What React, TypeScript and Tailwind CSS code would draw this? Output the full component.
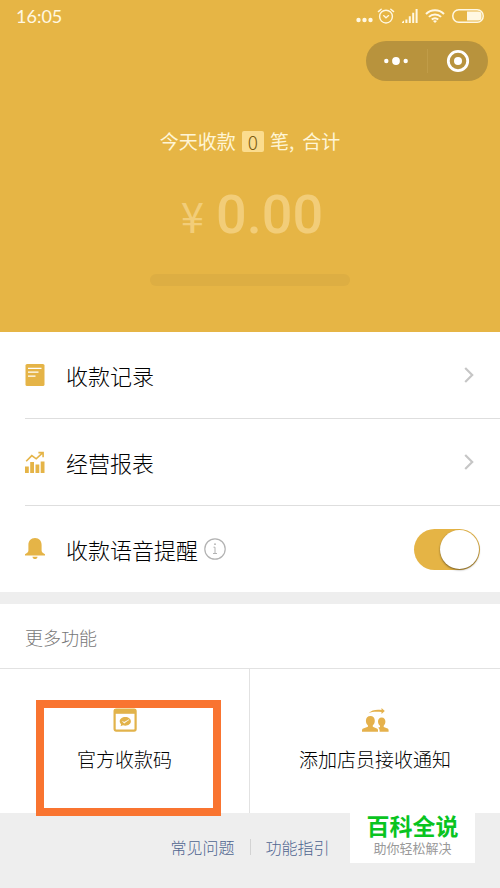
import { useState, type ReactNode } from "react";

type RowProps = {
  icon: ReactNode;
  label: string;
};

function AlarmIcon() {
  return (
    <svg width="18" height="16" viewBox="0 0 18 16" fill="none" stroke="currentColor" strokeLinecap="round" aria-hidden>
      <circle cx="9" cy="8.6" r="6.4" strokeWidth="1.4" />
      <path d="M6.6 7.6 9 9.8l2.6-2.2" strokeWidth="1.3" />
      <path d="M1.4 3.6 4.2 1.2M16.6 3.6 13.8 1.2" strokeWidth="1.4" />
    </svg>
  );
}

function SignalIcon() {
  return (
    <svg width="16" height="14" viewBox="0 0 16 14" fill="currentColor" aria-hidden>
      <path d="M0 14v-1l2-1.6V14zM3.4 10.4h2V14h-2zM6.8 7.2h2V14h-2zM10.2 3.8h2V14h-2zM13.6 0h2v14h-2z" />
    </svg>
  );
}

function WifiIcon() {
  return (
    <svg width="20" height="14" viewBox="0 0 20 14" fill="none" stroke="currentColor" strokeWidth="2" aria-hidden>
      <path d="M1 5c5-5 13-5 18 0" />
      <path d="M3.9 7.9c3.4-3.3 8.8-3.3 12.2 0" />
      <path d="M6.8 10.6c1.8-1.7 4.6-1.7 6.4 0" />
      <path d="M10 14 8 12c1.1-1 2.9-1 4 0z" fill="currentColor" stroke="none" />
    </svg>
  );
}

function BatteryIcon() {
  return (
    <svg width="32" height="14" viewBox="0 0 32 14" aria-hidden>
      <rect x="0.8" y="0.8" width="30.4" height="12.4" rx="6" fill="none" stroke="currentColor" strokeWidth="1.5" />
      <path d="M15 2.6h11.5a3 3 0 0 1 3 3v2.8a3 3 0 0 1-3 3H15z" fill="currentColor" />
    </svg>
  );
}

function RecordIcon() {
  return (
    <svg width="20" height="22" viewBox="0 0 20 22" aria-hidden>
      <rect x="0.5" width="19" height="22" rx="1.6" fill="#e5b447" />
      <path d="M3 4.3h13.5M3 8.2h10.5M3 12.2h7.5" stroke="#fff" strokeWidth="1.3" />
    </svg>
  );
}

function ReportIcon() {
  return (
    <svg width="20" height="22" viewBox="0 0 20 22" fill="#e5b447" aria-hidden>
      <path d="M0 15.5h3.8V22H0zM5.2 11H9v11H5.2zM10.5 13.5h3.8V22h-3.8zM15.7 10.5h3.8V22h-3.8z" />
      <path d="M1.2 10.2 6.8 4.6l4.4 3.2 6.4-6M13.4 1.6h4.7v4.6" fill="none" stroke="#e5b447" strokeWidth="1.6" />
    </svg>
  );
}

function BellIcon() {
  return (
    <svg width="20" height="22" viewBox="0 0 20 22" fill="#e5b447" aria-hidden>
      <path d="M10 0c4.2 0 6.6 3 6.6 7v5.6c0 1.6 1 2.6 3.4 3.6v1.2H0v-1.2c2.4-1 3.4-2 3.4-3.6V7c0-4 2.4-7 6.6-7z" />
      <path d="M7.4 18.8h5.2c-.3 1.5-1.3 2.3-2.6 2.3s-2.3-.8-2.6-2.3z" />
    </svg>
  );
}

function InfoIcon() {
  return (
    <svg width="22" height="22" viewBox="0 0 22 22" fill="none" stroke="#b2b2b2" aria-hidden>
      <circle cx="11" cy="11" r="10.2" strokeWidth="1.2" />
      <path d="M9.5 9.2H11v6.3M9 15.500h4" strokeWidth="1" />
      <circle cx="11" cy="6.2" r="0.9" fill="#b2b2b2" stroke="none" />
    </svg>
  );
}

function ChevronIcon() {
  return (
    <svg width="10" height="16" viewBox="0 0 10 16" fill="none" stroke="#c6c6c6" strokeWidth="2.2" aria-hidden>
      <path d="m1.2 1 7 7-7 7" />
    </svg>
  );
}

function CodeIcon() {
  return (
    <svg width="24" height="24" viewBox="0 0 24 24" aria-hidden>
      <rect x="1.6" y="1.6" width="21" height="21" rx="1.5" fill="none" stroke="#e2b34b" strokeWidth="2.2" />
      <path d="M1 1h22v4.8H1z" fill="#e2b34b" />
      <path d="M12.3 9c3.2 0 5.6 1.9 5.6 4.3s-2.4 4.400-5.600 4.400c-.8 0-1.600-.1-2.300-.4l-2.400.9.500-2c-.9-.8-1.400-1.800-1.400-2.900C6.700 10.900 9.100 9 12.300 9z" fill="#e2b34b" />
      <path d="m9.400 13.300 1.700.9 5-2.600-4.900 3.600z" fill="#fff" stroke="#fff" strokeWidth="0.4" />
    </svg>
  );
}

function StaffIcon() {
  return (
    <svg width="28" height="24" viewBox="0 0 28 24" fill="#e5b14c" aria-hidden>
      <path d="M7.5 5.2c3-3.2 7.4-4 13-3.3V0l3.3 3.1L20.5 6V4C15.500 3.400 11 3.600 7.500 5.200z" />
      <path d="M9.400 8c2.700 0 4.400 1.900 4.400 4.700 0 2-.8 3.600-2 4.600v1.500l4 1.700c.8.400 1.200.9 1.200 2v1.200H1v-1.200c0-1.100.4-1.600 1.200-2l4.700-1.700v-1.500c-1.200-1-2-2.600-2-4.600C4.900 9.900 6.700 8 9.400 8z" />
      <path d="M20.700 9.500c2.400 0 3.700 1.700 3.700 4.100 0 1.800-.7 3.200-1.700 4.100v1.400l3.900 1.500c.7.300 1 .8 1 1.800v1.300h-9v-1.200c0-1.300-.4-2.200-1.500-2.800l1.900-.7v-1.300c-1.200-.8-2-2.300-2-4.100 0-2.400 1.300-4.100 3.700-4.100z" />
    </svg>
  );
}

function StatusBar() {
  return (
    <div className="flex h-8 items-center justify-between px-4 text-[#fff8e3]">
      <span className="font-[Lato,sans-serif] text-lg font-normal">16:05</span>
      <div className="flex items-center gap-1">
        <svg width="17" height="14" viewBox="0 0 17 14" fill="currentColor" aria-hidden>
          <circle cx="2.5" cy="11" r="2.2" />
          <circle cx="8.5" cy="11" r="2.2" />
          <circle cx="14.5" cy="11" r="2.2" />
        </svg>
        <div className="flex items-center gap-[7px]">
          <AlarmIcon />
          <SignalIcon />
          <WifiIcon />
          <BatteryIcon />
        </div>
      </div>
    </div>
  );
}

function Capsule() {
  return (
    <div className="flex h-10 w-[122px] items-center self-end rounded-full bg-[#b8933d] text-white">
      <button type="button" aria-label="更多" className="flex flex-1 justify-center">
        <svg width="24" height="8" viewBox="0 0 24 8" fill="currentColor" aria-hidden>
          <circle cx="2.3" cy="4" r="2.2" />
          <circle cx="12" cy="4" r="3.9" />
          <circle cx="21.7" cy="4" r="2.2" />
        </svg>
      </button>
      <span className="h-6 w-px bg-[#c09c48]" />
      <button type="button" aria-label="关闭" className="flex flex-1 justify-center">
        <svg width="24" height="24" viewBox="0 0 24 24" aria-hidden>
          <circle cx="12" cy="12" r="9.7" fill="none" stroke="currentColor" strokeWidth="2.8" />
          <circle cx="12" cy="12" r="4" fill="currentColor" />
        </svg>
      </button>
    </div>
  );
}

function LinkRow({ icon, label }: RowProps) {
  return (
    <li className="border-b border-[#dedede]">
      <button type="button" className="flex w-full items-center py-7 pr-[26px] text-left">
        {icon}
        <span className="ml-[21px] flex-1 text-[22px] leading-[30px]">{label}</span>
        <ChevronIcon />
      </button>
    </li>
  );
}

export default function App() {
  const [voice, setVoice] = useState(true);

  return (
    <main className="flex min-h-screen flex-col bg-[#eeeeee] font-['Noto_Sans_CJK_SC',sans-serif] font-light text-black">
      <section className="flex flex-col bg-[#e6b545] pb-[46px]">
        <StatusBar />
        <div className="mt-[9px] flex flex-col pr-3">
          <Capsule />
        </div>
        <p className="mt-[46px] flex items-center justify-center gap-[6px] text-[19px] leading-7 font-normal text-[#fff5d6]">
          <span>今天收款</span>
          <span className="rounded-xs bg-[#fbdc8e] px-[6px] leading-[21px] font-light text-[#7d5c10]">0</span>
          <span className="flex gap-2">
            <span>笔,</span>
            <span>合计</span>
          </span>
        </p>
        <p className="mt-[30px] flex items-center justify-center gap-3 pl-1 text-[#f2cd79]">
          <span className="text-[42px] leading-[60px] font-normal">¥</span>
          <span className="font-[Roboto,sans-serif] text-[54px] leading-[60px] font-medium">0.00</span>
        </p>
        <div className="mx-auto mt-[29px] h-3 w-2/5 rounded-md bg-[#ddae43]" />
      </section>

      <ul className="bg-white pl-[25px]">
        <LinkRow icon={<RecordIcon />} label="收款记录" />
        <LinkRow icon={<ReportIcon />} label="经营报表" />
        <li className="flex min-h-[86px] items-center pr-5">
          <BellIcon />
          <label htmlFor="voice" className="ml-[21px] text-[22px] leading-[30px]">
            收款语音提醒
          </label>
          <button type="button" aria-label="说明" className="ml-[6px]">
            <InfoIcon />
          </button>
          <span className="relative ml-auto h-[41px] w-[66px]">
            <input
              id="voice"
              type="checkbox"
              role="switch"
              checked={voice}
              onChange={(e) => setVoice(e.target.checked)}
              className="peer block h-full w-full appearance-none rounded-full bg-gray-300 checked:bg-[#e5b445]"
            />
            <span className="pointer-events-none absolute top-px left-px size-[39px] rounded-full bg-white shadow-[0_1px_2px_rgba(0,0,0,0.5)] peer-checked:left-[26px]" />
          </span>
        </li>
      </ul>

      <section className="mt-3 bg-white">
        <h2 className="border-b border-[#e2e2e2] px-[25px] pt-[19px] pb-[17px] text-lg leading-7 font-light text-[#777]">
          更多功能
        </h2>
        <div className="grid grid-cols-2">
          <div className="relative border-r border-[#e2e2e2]">
            <button type="button" className="flex w-full flex-col items-center pt-[39px] pb-10 text-[19px]">
              <CodeIcon />
              <span className="mt-[13px] leading-7">官方收款码</span>
            </button>
            <div className="pointer-events-none absolute top-[31px] right-[28px] -bottom-[3px] left-9 border-8 border-[#f97430]" />
          </div>
          <button type="button" className="flex flex-col items-center pt-[39px] pb-10 text-[19px]">
            <StaffIcon />
            <span className="mt-[13px] leading-7">添加店员接收通知</span>
          </button>
        </div>
      </section>

      <footer className="relative flex items-center justify-center gap-[15px] pt-[22px] text-base leading-6 text-[#4f6590]">
        <a href="#faq">常见问题</a>
        <span className="h-4 w-px bg-[#d3d3d3]" />
        <a href="#guide">功能指引</a>
        <div className="absolute top-0 right-[25px] flex h-[50px] w-[125px] flex-col items-center bg-white font-['Liberation_Sans','Noto_Sans_CJK_SC',sans-serif]">
          <strong className="text-[23px] leading-7 font-bold text-[#09c41f]">百科全说</strong>
          <span className="text-[13px] leading-4 font-normal text-[#999]">助你轻松解决</span>
        </div>
      </footer>
    </main>
  );
}
